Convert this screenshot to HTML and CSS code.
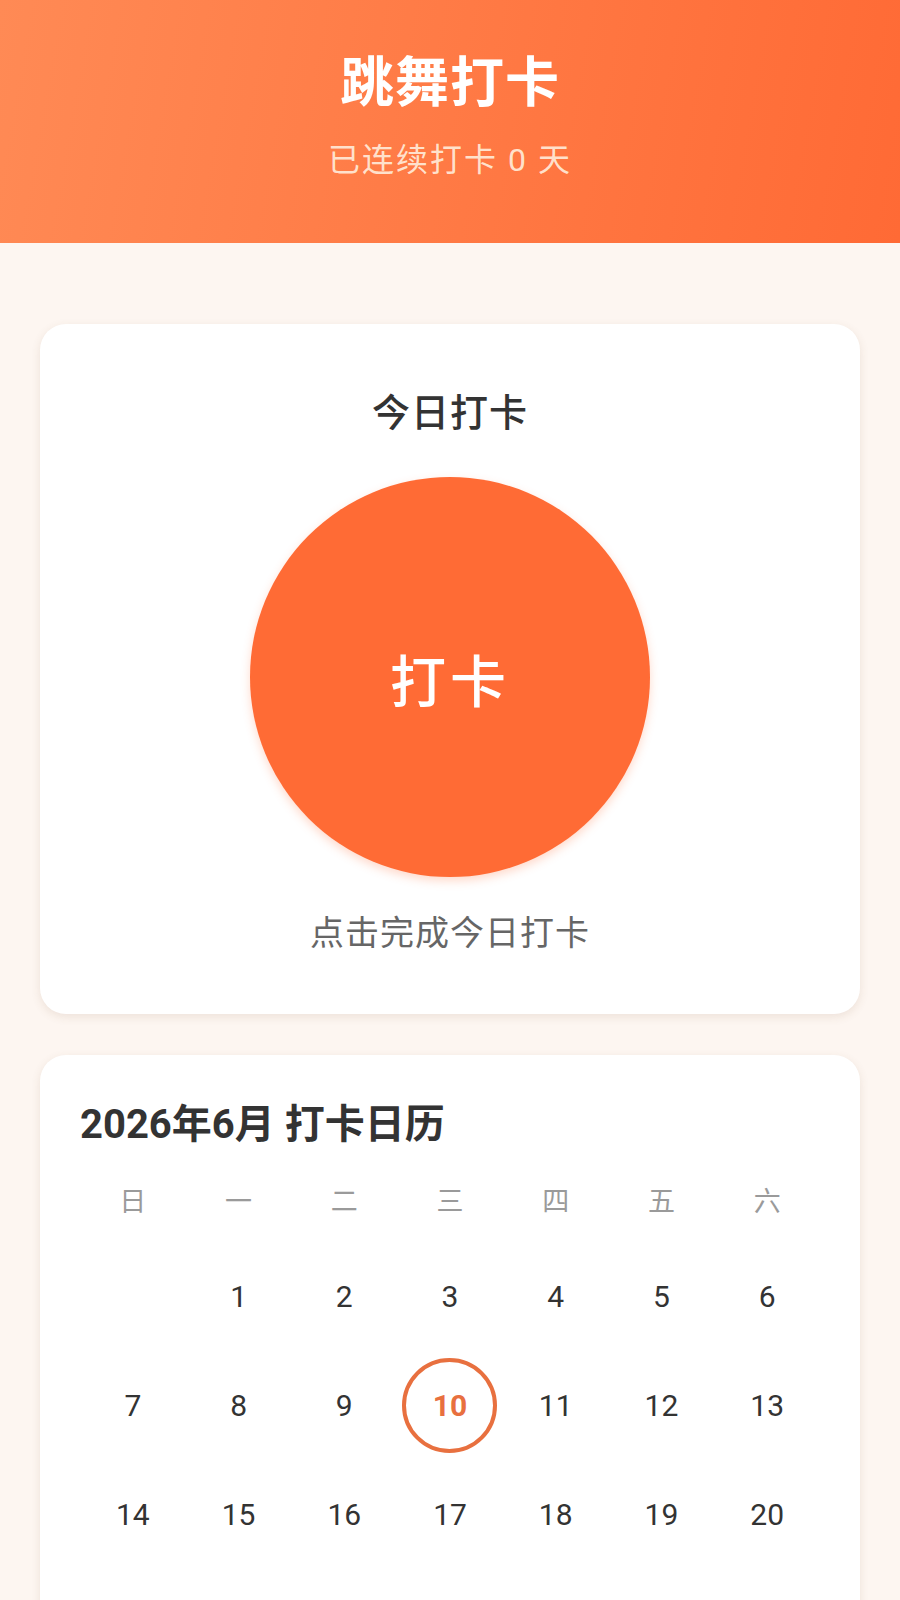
FILE: index.html
```html
<!DOCTYPE html>
<html lang="zh-CN">
<head>
<meta charset="utf-8">
<title>跳舞打卡</title>
<link rel="stylesheet" href="styles.css">
</head>
<body>
<header class="hero">
  <h1 class="hero-title">跳舞打卡</h1>
  <p class="hero-sub">已连续打卡 0 天</p>
</header>
<main class="content">
  <section class="card checkin">
    <h2 class="checkin-title">今日打卡</h2>
    <button class="checkin-btn" type="button">打卡</button>
    <p class="checkin-hint">点击完成今日打卡</p>
  </section>
  <section class="card calendar">
    <h2 class="cal-title">2026年6月 打卡日历</h2>
    <div class="weekdays">
      <span>日</span><span>一</span><span>二</span><span>三</span><span>四</span><span>五</span><span>六</span>
    </div>
    <div class="days">
      <span class="day"></span>
      <span class="day">1</span><span class="day">2</span><span class="day">3</span><span class="day">4</span><span class="day">5</span><span class="day">6</span>
      <span class="day">7</span><span class="day">8</span><span class="day">9</span><span class="day today"><span class="ring">10</span></span><span class="day">11</span><span class="day">12</span><span class="day">13</span>
      <span class="day">14</span><span class="day">15</span><span class="day">16</span><span class="day">17</span><span class="day">18</span><span class="day">19</span><span class="day">20</span>
    </div>
  </section>
</main>
</body>
</html>
```

FILE: styles.css
```css
* { box-sizing: border-box; }

body {
  margin: 0;
  background: #fdf6f1;
  font-family: Roboto, "Noto Sans CJK SC", "Noto Sans", sans-serif;
  color: #333;
}

.hero {
  height: 243px;
  padding-top: 46px;
  background: linear-gradient(100deg, #ff8a55 0%, #ff7a45 50%, #ff6a35 100%);
  text-align: center;
}

.hero-title {
  margin: 0;
  font-size: 54px;
  line-height: 76px;
  font-weight: 700;
  color: #fff;
  letter-spacing: 1px;
}

.hero-sub {
  margin: 17px 0 0;
  font-size: 32px;
  line-height: 42px;
  color: rgba(255, 236, 218, 0.92);
  letter-spacing: 2px;
}

.content {
  padding: 81px 40px 40px;
  display: flex;
  flex-direction: column;
  gap: 41px;
}

.card {
  background: #fff;
  border-radius: 26px;
  box-shadow: 0 3px 10px rgba(120, 80, 50, 0.12);
}

.checkin {
  height: 690px;
  padding: 60px 40px 0;
  display: flex;
  flex-direction: column;
  align-items: center;
}

.checkin-title {
  margin: 0;
  font-size: 38px;
  line-height: 58px;
  font-weight: 500;
  color: #333;
  letter-spacing: 1px;
}

.checkin-btn {
  margin-top: 35px;
  width: 400px;
  height: 400px;
  border: none;
  border-radius: 50%;
  background: #ff6b35;
  color: #fff;
  font-family: inherit;
  font-size: 56px;
  font-weight: 500;
  letter-spacing: 4px;
  box-shadow: 0 4px 10px rgba(255, 107, 53, 0.25);
}

.checkin-hint {
  margin: 32px 0 0;
  font-size: 34px;
  line-height: 48px;
  color: #666;
  letter-spacing: 1px;
}

.calendar {
  padding: 40px 40px 80px;
}

.cal-title {
  margin: 0;
  font-size: 40px;
  line-height: 60px;
  font-weight: 700;
  color: #333;
}

.weekdays {
  margin-top: 19px;
  display: grid;
  grid-template-columns: repeat(7, 1fr);
  height: 50px;
  align-items: center;
  text-align: center;
  font-size: 27px;
  color: #9a9a9a;
}

.days {
  margin-top: 25px;
  display: grid;
  grid-template-columns: repeat(7, 1fr);
  row-gap: 14px;
}

.day {
  height: 95px;
  display: flex;
  align-items: center;
  justify-content: center;
  font-size: 30px;
  color: #333;
}

.ring {
  width: 95px;
  height: 95px;
  border: 4px solid #e8703f;
  border-radius: 50%;
  display: flex;
  align-items: center;
  justify-content: center;
  color: #e8703f;
  font-weight: 700;
}
```
